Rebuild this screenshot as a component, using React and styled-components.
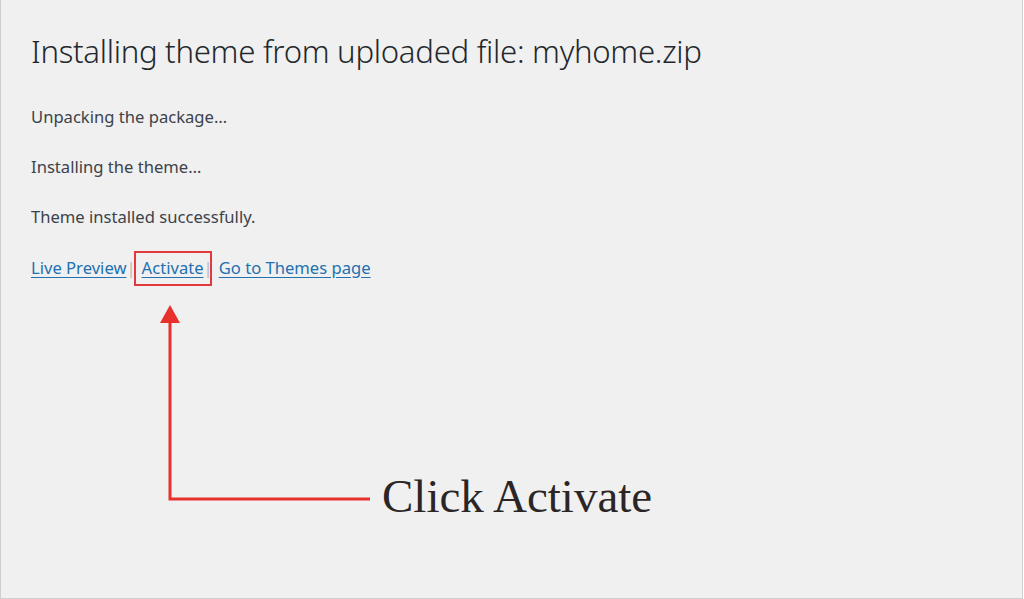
import React from 'react';
import styled, { createGlobalStyle } from 'styled-components';

const GlobalStyle = createGlobalStyle`
  html, body {
    margin: 0;
    padding: 0;
    background: #ffffff;
  }
`;

const Frame = styled.div`
  box-sizing: border-box;
  width: 1023px;
  height: 599px;
  background: #f0f0f0;
  border: 1px solid #cfcfcf;
  border-top: none;
  padding: 31px 0 0 30px;
  font-family: "Noto Sans", "Open Sans", sans-serif;
  color: #3c434a;
  overflow: hidden;
`;

const Title = styled.h1`
  margin: 0 0 21px;
  font-size: 31.2px;
  font-weight: 300;
  line-height: 40px;
  color: #23282d;
  letter-spacing: -0.3px;
`;

const Line = styled.p`
  margin: 0;
  font-size: 16.6px;
  line-height: 50px;
`;

const Actions = styled.div`
  display: flex;
  align-items: center;
  height: 50px;
  font-size: 16.6px;
`;

const Link = styled.a`
  color: #2271b1;
  text-decoration: underline;
  text-underline-offset: 3px;
`;

const Separator = styled.span`
  color: #b8b8b8;
  margin-right: 6px;
`;

const Highlight = styled.span`
  position: relative;

  &::after {
    content: '';
    position: absolute;
    top: -5px;
    bottom: -7px;
    left: -8px;
    right: -8px;
    border: 2px solid #e2393a;
  }
`;

const Callout = styled.div`
  display: flex;
  align-items: flex-end;
  margin: 13px 0 0 129px;
`;

const Label = styled.span`
  margin: 0 0 -20px 10px;
  font-family: "Liberation Serif", "DejaVu Serif", serif;
  font-size: 47px;
  line-height: 50px;
  color: #2b2625;
`;

function Arrow() {
  return (
    <svg width="212" height="196" viewBox="0 0 212 196">
      <polygon points="10,0 0,18 20,18" fill="#e8302d" />
      <polyline
        points="10,16 10,194 210,194"
        fill="none"
        stroke="#e8302d"
        strokeWidth="3"
      />
    </svg>
  );
}

export default function App() {
  return (
    <>
      <GlobalStyle />
      <Frame>
        <Title>Installing theme from uploaded file: myhome.zip</Title>
        <Line>Unpacking the package…</Line>
        <Line>Installing the theme…</Line>
        <Line>Theme installed successfully.</Line>
        <Actions>
          <Link href="#">Live Preview</Link>
          <Separator>|</Separator>
          <Highlight>
            <Link href="#">Activate</Link>
          </Highlight>
          <Separator>|</Separator>
          <Link href="#">Go to Themes page</Link>
        </Actions>
        <Callout>
          <Arrow />
          <Label>Click Activate</Label>
        </Callout>
      </Frame>
    </>
  );
}
